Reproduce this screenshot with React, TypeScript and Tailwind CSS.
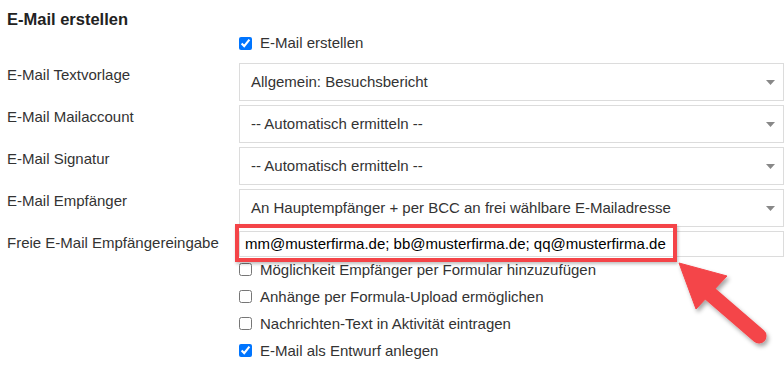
const selects = [
  { label: "E-Mail Textvorlage", value: "Allgemein: Besuchsbericht" },
  { label: "E-Mail Mailaccount", value: "-- Automatisch ermitteln --" },
  { label: "E-Mail Signatur", value: "-- Automatisch ermitteln --" },
  {
    label: "E-Mail Empfänger",
    value: "An Hauptempfänger + per BCC an frei wählbare E-Mailadresse",
  },
];

const options = [
  { label: "Möglichkeit Empfänger per Formular hinzuzufügen", checked: false },
  { label: "Anhänge per Formula-Upload ermöglichen", checked: false },
  { label: "Nachrichten-Text in Aktivität eintragen", checked: false },
  { label: "E-Mail als Entwurf anlegen", checked: true },
];

const Check = ({ label, checked }: { label: string; checked: boolean }) => (
  <label className="flex items-center gap-[8px] h-[27px]">
    <input
      type="checkbox"
      defaultChecked={checked}
      className="m-0 w-[13px] h-[13px] accent-[#0075ff]"
    />
    <span>{label}</span>
  </label>
);

export default function App() {
  return (
    <div className="relative w-[784px] h-[367px] overflow-hidden bg-white text-[#333] text-[15px] leading-[20px] font-['Liberation_Sans',Arial,sans-serif]">
      <div className="pl-[7px]">
        <h3 className="pt-[9px] text-[16.5px] leading-[20px] font-bold text-[#222]">
          E-Mail erstellen
        </h3>

        <div className="grid grid-cols-[232px_1fr] mt-[2px]">
          <div />
          <label className="flex items-center gap-[8px] h-[24px]">
            <input
              type="checkbox"
              defaultChecked
              className="m-0 w-[13px] h-[13px] accent-[#0075ff]"
            />
            <span>E-Mail erstellen</span>
          </label>
        </div>

        <div className="mt-[8px] flex flex-col gap-[4px]">
          {selects.map((s) => (
            <div key={s.label} className="grid grid-cols-[232px_1fr]">
              <div className="pt-[2px]">{s.label}</div>
              <div className="h-[38px] border border-[#dcdcdc] flex items-center justify-between pl-[11px] pr-[8px]">
                <span>{s.value}</span>
                <svg width="9" height="5" viewBox="0 0 9 5">
                  <path d="M0 0 H9 L4.5 5 Z" fill="#888" />
                </svg>
              </div>
            </div>
          ))}

          <div className="grid grid-cols-[232px_1fr]">
            <div className="pt-[2px]">Freie E-Mail Empfängereingabe</div>
            <div className="h-[26px] border border-[#dcdcdc] flex items-center pl-[5px] text-black">
              mm@musterfirma.de; bb@musterfirma.de; qq@musterfirma.de
            </div>
          </div>
        </div>

        <div className="grid grid-cols-[232px_1fr] -mt-[1px]">
          <div />
          <div className="flex flex-col">
            {options.map((o) => (
              <Check key={o.label} {...o} />
            ))}
          </div>
        </div>
      </div>

      {/* highlight box */}
      <div className="absolute left-[235px] top-[224px] w-[442px] h-[38px] border-[4px] border-[#f44448] shadow-[1px_2px_3px_rgba(0,0,0,0.25)]" />

      {/* arrow */}
      <svg
        className="absolute left-0 top-0"
        width="784"
        height="367"
        viewBox="0 0 784 367"
      >
        <defs>
          <filter id="sh" x="-20%" y="-20%" width="140%" height="140%">
            <feDropShadow dx="2" dy="3" stdDeviation="2" floodColor="#000" floodOpacity="0.35" />
          </filter>
        </defs>
        <g filter="url(#sh)" fill="#f44448" stroke="#f44448">
          <line x1="708" y1="292" x2="759" y2="336" strokeWidth="15" strokeLinecap="round" />
          <polygon points="679,263 696,309 727,276" strokeWidth="1" strokeLinejoin="round" />
        </g>
      </svg>
    </div>
  );
}
